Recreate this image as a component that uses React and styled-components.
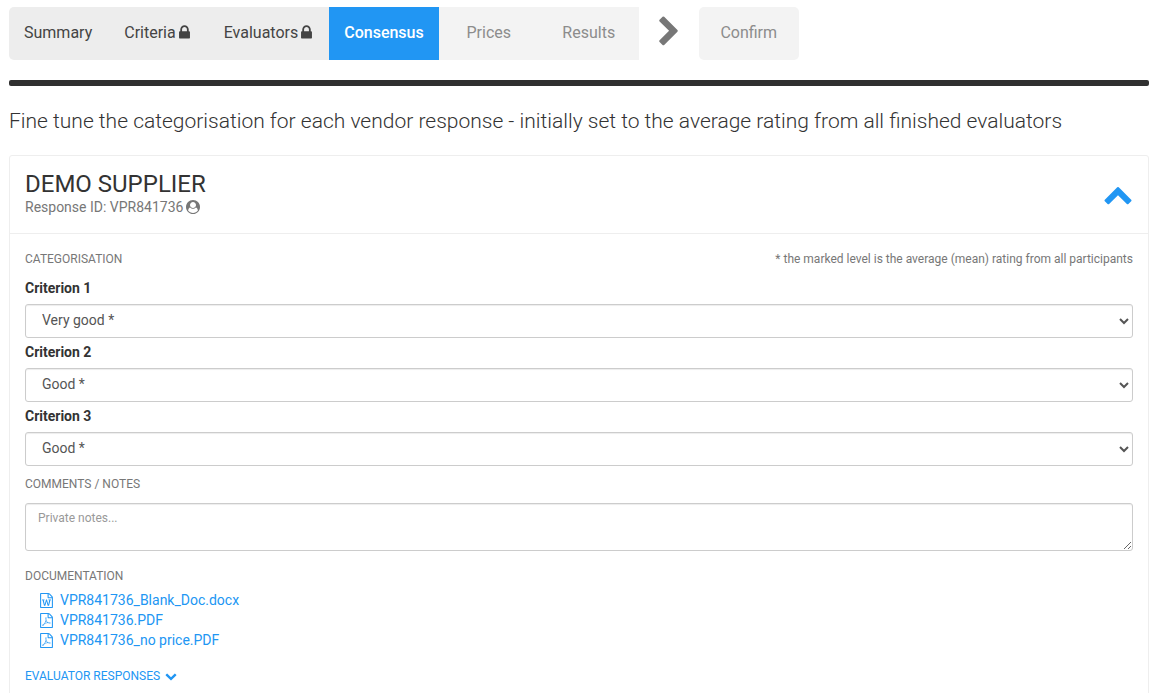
import React, { useState } from "react"
import styled, { createGlobalStyle } from "styled-components"

const GlobalStyle = createGlobalStyle`
    * {
        box-sizing: border-box;
    }

    body {
        background: #fff;
        color: #333;
        font-family: Roboto, "Liberation Sans", sans-serif;
        font-size: 14px;
        line-height: 20px;
        margin: 0;
        overflow-x: hidden;
    }
`

const Page = styled.main`
    padding: 7px 12px 0 9px;
`

const Steps = styled.nav`
    align-items: center;
    display: flex;
    padding-bottom: 20px;
`

const StepGroup = styled.div`
    border-radius: ${ props => props.$single ? "5px" : "5px 0 0 5px" };
    display: flex;
    overflow: hidden;
`

const Step = styled.button`
    align-items: center;
    background: ${ props => props.$active ? "#2196f3" : props.disabled ? "#f3f3f3" : "#ededed" };
    border: none;
    color: ${ props => props.$active ? "#fff" : props.disabled ? "#8c8c8c" : "#444" };
    display: flex;
    font-family: inherit;
    font-size: 16px;
    font-weight: ${ props => props.$active ? 500 : 400 };
    gap: 3px;
    height: 53px;
    justify-content: center;
    padding: 0 ${ props => props.$wide ? 17 : 15 }px 2px;
    min-width: ${ props => props.disabled ? "100px" : "0" };
`

const StepArrow = styled.span`
    color: #777;
    display: flex;
    justify-content: center;
    padding-bottom: 3px;
    width: 60px;
`

const Rule = styled.hr`
    background: #303030;
    border: none;
    border-radius: 2px;
    height: 6px;
    margin: 0;
`

const Lead = styled.h1`
    font-size: 21px;
    font-weight: 300;
    line-height: 28px;
    margin: 21px 0 20px;
`

const Panel = styled.section`
    border: 1px solid #eee;
    border-radius: 3px;
`

const PanelHeader = styled.header`
    align-items: center;
    border-bottom: 1px solid #eee;
    display: flex;
    justify-content: space-between;
    padding: 15px;
`

const Supplier = styled.h2`
    font-size: 24px;
    font-weight: 400;
    line-height: 26px;
    margin: 0;
`

const ResponseId = styled.div`
    align-items: center;
    color: #777;
    display: flex;
    gap: 3px;
    padding-bottom: 1px;
`

const ToggleButton = styled.button`
    background: none;
    border: none;
    color: #2196f3;
    display: flex;
    padding: 0 0 2px;
`

const PanelBody = styled.div`
    padding: 15px;
`

const Caption = styled.h3`
    color: #777;
    font-size: 12px;
    font-weight: 400;
    line-height: 20px;
    margin: 0;
`

const CaptionRow = styled.div`
    display: flex;
    justify-content: space-between;
    padding-bottom: 9px;
`

const Hint = styled.span`
    color: #777;
    font-size: 12px;
`

const Field = styled.div`
    display: flex;
    flex-direction: column;
    gap: 6px;
    padding-bottom: 4px;
`

const Label = styled.label`
    font-weight: 700;
`

const Select = styled.select`
    background: #fff;
    border: 1px solid #ccc;
    border-radius: 3px;
    box-shadow: inset 0 1px 1px rgba(0, 0, 0, 0.075);
    color: #555;
    font-family: inherit;
    font-size: 14px;
    height: 34px;
    padding: 4px 0 6px 12px;
    width: 100%;
`

const Notes = styled.textarea`
    border: 1px solid #ccc;
    border-radius: 3px;
    box-shadow: inset 0 1px 1px rgba(0, 0, 0, 0.075);
    color: #555;
    display: block;
    font-family: inherit;
    font-size: 12px;
    height: 48px;
    line-height: 17px;
    margin: 9px 0 15px;
    padding: 6px 12px;
    width: 100%;

    &::placeholder {
        color: #999;
    }
`

const NotesLabel = styled.label`
    color: #777;
    display: block;
    font-size: 12px;
    padding-top: 4px;
`

const Files = styled.ul`
    list-style: none;
    margin: 4px 0 16px;
    padding: 0 0 0 15px;
`

const FileLink = styled.a`
    align-items: center;
    color: #2196f3;
    display: flex;
    gap: 7px;
    text-decoration: none;
`

const ResponsesButton = styled(ToggleButton)`
    align-items: center;
    font-family: inherit;
    font-size: 12px;
    gap: 5px;
    line-height: 20px;
`

const paper = "M1596 380q28 28 48 76t20 88v1152q0 40-28 68t-68 28h-1344q-40 0-68-28t-28-68v-1600q0-40 28-68t68-28h896q40 0 88 20t76 48zm-444-244v376h376q-10-29-22-41l-313-313q-12-12-41-22zm384 1528v-1024h-416q-40 0-68-28t-28-68v-416h-768v1536h1280z"

const shapes = {
    lock: "M640 768h512v-192q0-106-75-181t-181-75-181 75-75 181v192zm832 96v576q0 40-28 68t-68 28h-960q-40 0-68-28t-28-68v-576q0-40 28-68t68-28h32v-192q0-184 132-316t316-132 316 132 132 316v192h32q40 0 68 28t28 68z",
    right: "M1363 877l-742 742q-19 19-45 19t-45-19l-166-166q-19-19-19-45t19-45l531-531-531-531q-19-19-19-45t19-45l166-166q19-19 45-19t45 19l742 742q19 19 19 45t-19 45z",
    up: "M1683 1331l-166 165q-19 19-45 19t-45-19l-531-531-531 531q-19 19-45 19t-45-19l-166-165q-19-19-19-45.5t19-45.5l742-741q19-19 45-19t45 19l742 741q19 19 19 45.5t-19 45.5z",
    down: "M1683 808l-742 741q-19 19-45 19t-45-19l-742-741q-19-19-19-45.5t19-45.5l166-165q19-19 45-19t45 19l531 531 531-531q19-19 45-19t45 19l166 165q19 19 19 45.5t-19 45.5z",
    user: "M1523 1339q-22-155-87.5-257.5t-184.5-118.5q-67 74-159.5 115.5t-195.5 41.5-195.5-41.5-159.5-115.5q-119 16-184.5 118.5t-87.5 257.5q106 150 271 237.5t356 87.5 356-87.5 271-237.5zm-243-699q0-159-112.5-271.5t-271.5-112.5-271.5 112.5-112.5 271.5 112.5 271.5 271.5 112.5 271.5-112.5 112.5-271.5zm512 256q0 182-71 347.5t-190.5 286-285.5 191.5-349 71q-182 0-348-71t-286-191-191-286-71-348 71-348 191-286 286-191 348-71 348 71 286 191 191 286 71 348z",
    word: paper + "m-1175-896v107h70l164 661h159l128-485q7-20 10-46 2-16 2-24h4l3 24q1 3 3.5 20t5.5 26l128 485h159l164-661h70v-107h-300v107h90l-99 438q-5 20-7 46l-2 21h-4q0-3-.5-6.5t-1.5-8-1-6.5q-1-5-4-21t-5-25l-144-545h-114l-144 545q-2 9-4.5 24.5t-3.5 21.5l-4 21h-4l-2-21q-2-26-7-46l-99-438h90v-107h-300z",
    pdf: paper + "m-514-593q33 26 84 56 59-7 117-7 147 0 177 49 16 22 2 52 0 1-1 2l-2 2v1q-6 38-71 38-48 0-115-20t-130-53q-221 24-392 83-153 262-242 262-15 0-28-7l-24-12q-1-1-6-5-10-10-6-36 9-40 56-91.5t132-96.5q14-9 23 6 2 2 2 4 52-85 107-197 68-136 104-262-24-82-30.5-159.5t6.5-127.5q11-40 42-40h22q23 0 35 15 18 21 9 68-2 6-4 8 1 3 1 8v30q-2 123-14 192 55 164 146 238zm-576 411q52-24 137-158-51 40-87.5 84t-49.5 74zm398-920q-15 42-2 132 1-7 7-44 0-3 7-43 1-4 4-8-1-1-1-2-1-2-1-3-1-22-13-36 0 1-1 2v2zm-124 661q135-54 284-81-2-1-13-9.5t-16-13.5q-76-67-127-176-27 86-83 197-30 56-45 83zm646-16q-24-24-140-24 76 28 124 28 14 0 18-1 0-1-2-3z"
}

// left edge and width of each shape inside the 1792 unit square
const boxes = {
    lock: [ 320, 1152 ],
    right: [ 346, 1036 ],
    word: [ 128, 1536 ],
    pdf: [ 128, 1536 ]
}

function Icon({ name, size }) {
    const [ left, width ] = boxes[name] || [ 0, 1792 ]

    return <svg
        width={ Math.round(size * width / 1792) }
        height={ size }
        viewBox={ `${ left } 0 ${ width } 1792` }
        fill="currentColor"
        aria-hidden="true"
    >
        <path d={ shapes[name] }/>
    </svg>
}

const ratings = [ "Very good", "Good", "Satisfactory", "Poor" ]

const criteria = [
    { id: "criterion-1", label: "Criterion 1", average: "Very good" },
    { id: "criterion-2", label: "Criterion 2", average: "Good" },
    { id: "criterion-3", label: "Criterion 3", average: "Good" }
]

const files = [
    { name: "VPR841736_Blank_Doc.docx", icon: "word" },
    { name: "VPR841736.PDF", icon: "pdf" },
    { name: "VPR841736_no price.PDF", icon: "pdf" }
]

function Criterion({ id, label, average }) {
    return <Field>
        <Label htmlFor={ id }>{ label }</Label>
        <Select id={ id } defaultValue={ average }>
            { ratings.map(rating =>
                <option key={ rating } value={ rating }>
                    { rating === average ? rating + " *" : rating }
                </option>
            ) }
        </Select>
    </Field>
}

export default function App() {

    const [ open, setOpen ] = useState(true)

    return <Page>

        <GlobalStyle/>

        <Steps aria-label="Evaluation steps">
            <StepGroup>
                <Step>Summary</Step>
                <Step $wide>Criteria <Icon name="lock" size={ 17 }/></Step>
                <Step $wide>Evaluators <Icon name="lock" size={ 17 }/></Step>
                <Step $active aria-current="step">Consensus</Step>
                <Step disabled>Prices</Step>
                <Step disabled>Results</Step>
            </StepGroup>
            <StepArrow><Icon name="right" size={ 32 }/></StepArrow>
            <StepGroup $single>
                <Step disabled>Confirm</Step>
            </StepGroup>
        </Steps>

        <Rule/>

        <Lead>Fine tune the categorisation for each vendor response - initially set to the average rating from all finished evaluators</Lead>

        <Panel>

            <PanelHeader>
                <div>
                    <Supplier>DEMO SUPPLIER</Supplier>
                    <ResponseId>Response ID: VPR841736 <Icon name="user" size={ 14 }/></ResponseId>
                </div>
                <ToggleButton aria-label="Toggle supplier" aria-expanded={ open } onClick={ () => setOpen(!open) }>
                    <Icon name={ open ? "up" : "down" } size={ 30 }/>
                </ToggleButton>
            </PanelHeader>

            { open && <PanelBody>

                <CaptionRow>
                    <Caption>CATEGORISATION</Caption>
                    <Hint>* the marked level is the average (mean) rating from all participants</Hint>
                </CaptionRow>

                { criteria.map(item => <Criterion key={ item.id } { ...item }/>) }

                <NotesLabel htmlFor="notes">COMMENTS / NOTES</NotesLabel>
                <Notes id="notes" placeholder="Private notes..."/>

                <Caption>DOCUMENTATION</Caption>
                <Files>
                    { files.map(file =>
                        <li key={ file.name }>
                            <FileLink href="#"><Icon name={ file.icon } size={ 15 }/> { file.name }</FileLink>
                        </li>
                    ) }
                </Files>

                <ResponsesButton>EVALUATOR RESPONSES <Icon name="down" size={ 12 }/></ResponsesButton>

            </PanelBody> }

        </Panel>

    </Page>
}
